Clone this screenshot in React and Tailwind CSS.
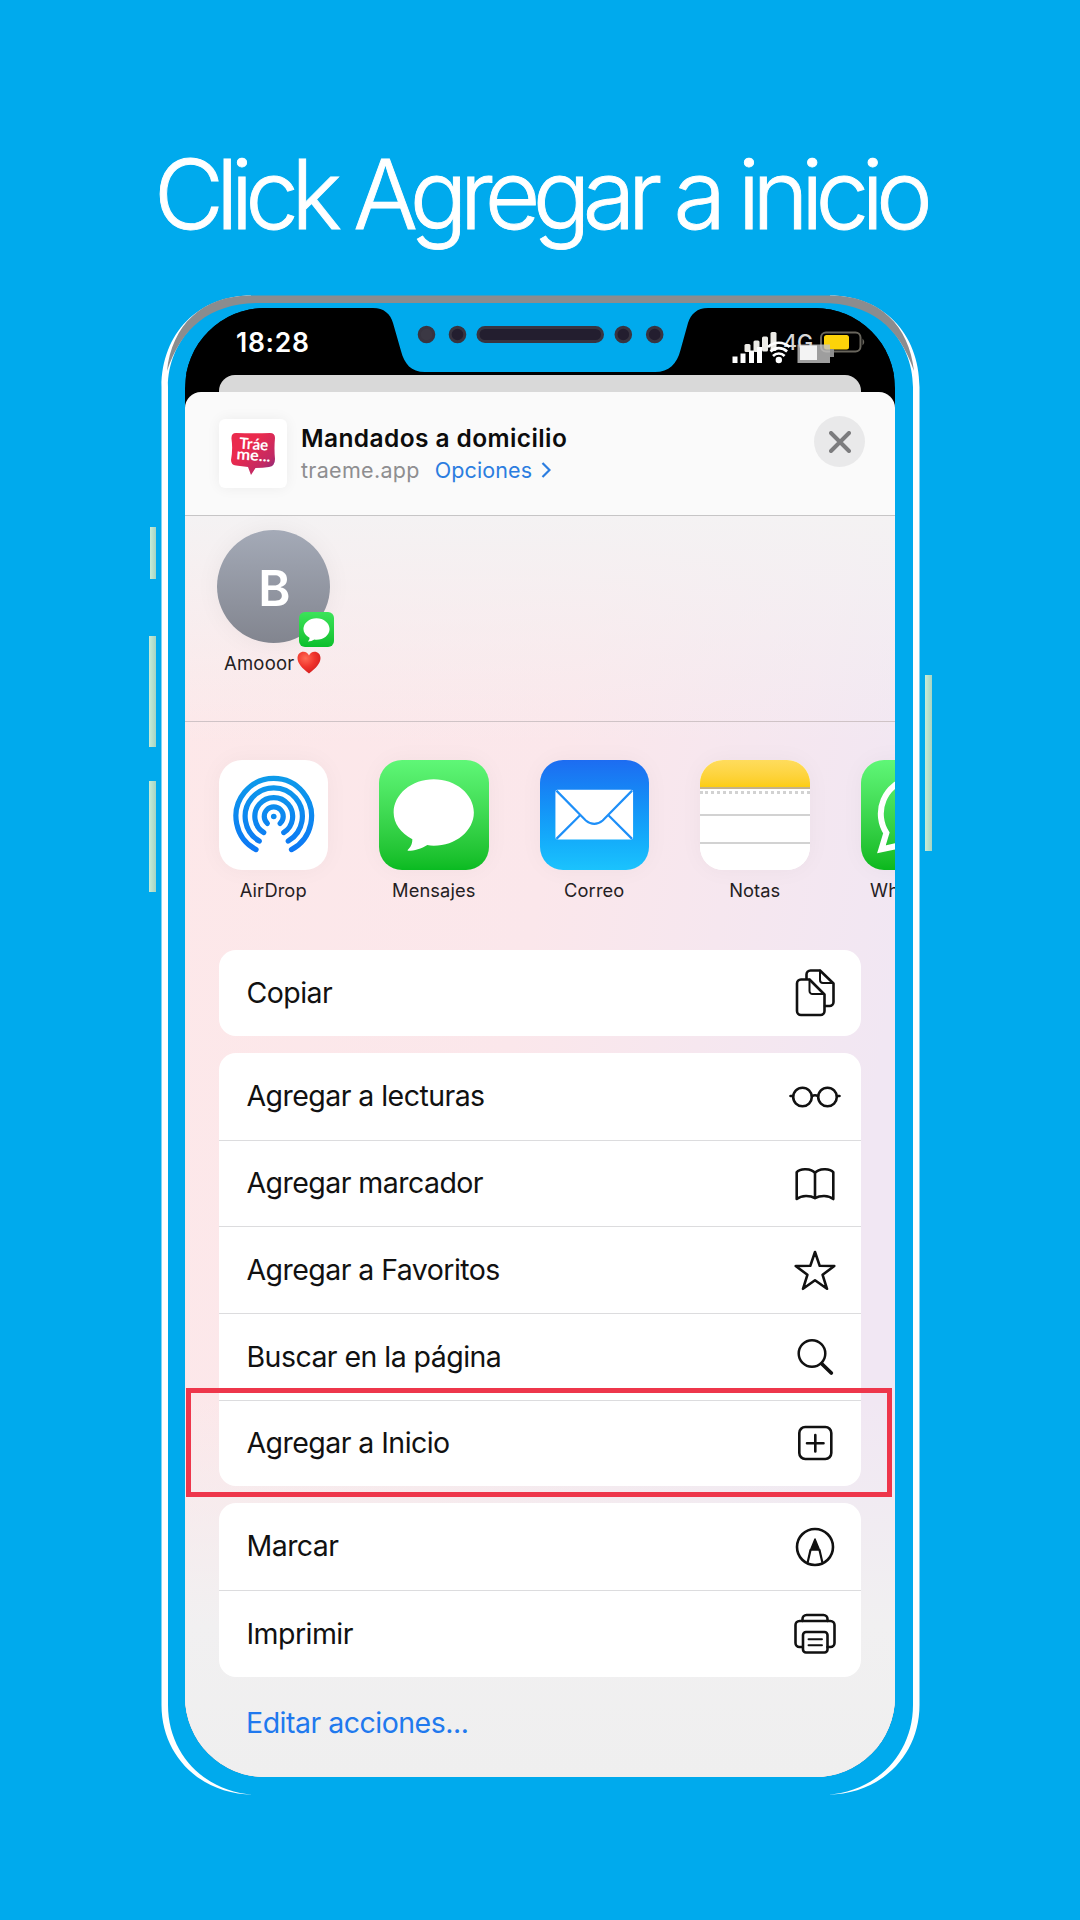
import React from "react";

const stroke = {
  fill: "none",
  stroke: "#111",
  strokeWidth: 2.6,
  strokeLinecap: "round",
  strokeLinejoin: "round",
};

function Icon({ children }) {
  return (
    <svg className="block h-[54px] w-[54px] shrink-0" viewBox="0 0 54 54" {...stroke}>
      {children}
    </svg>
  );
}

const CopyIcon = () => (
  <Icon>
    <path d="M18.5 12.5V8.5a4 4 0 0 1 4-4H32L45.5 17.500V36a4 4 0 0 1-4 4H37" />
    <path d="M32 4.500V14a3 3 0 0 0 3 3H45" strokeWidth="2" />
    <path d="M21.500 13.500H13a4 4 0 0 0-4 4V45a4 4 0 0 0 4 4H32.500a4 4 0 0 0 4-4V28.500Z" />
    <path d="M21.500 13.500V25a3 3 0 0 0 3 3H36" strokeWidth="2" />
  </Icon>
);

const GlassesIcon = () => (
  <Icon>
    <circle cx="14.500" cy="27" r="9.300" />
    <circle cx="39.500" cy="27" r="9.300" />
    <path d="M24 26q3-1.500 6 0M2.500 26H5M49 26h2.500" />
  </Icon>
);

const BookIcon = () => (
  <Icon>
    <path
      d="M27 16C23.500 11.300 12 10.900 8.700 15.300V42c5-4 13.500-3.700 18.300-.8C32 38.300 40.500 38 45.300 42V15.300C42 10.900 30.500 11.300 27 16ZM27 16V41"
      strokeLinejoin="round"
    />
  </Icon>
);

const StarIcon = () => (
  <Icon>
    <path d="M27 9L31.700 22.800L46.300 23L34.600 31.800L39 45.800L27 37.300L15 45.800L19.400 31.800L7.700 23L22.300 22.800Z" />
  </Icon>
);

const SearchIcon = () => (
  <Icon>
    <circle cx="24" cy="23.500" r="13.300" strokeWidth="2.500" />
    <path d="M34 34L43.300 43" strokeWidth="3.800" />
  </Icon>
);

const PlusSquareIcon = () => (
  <Icon>
    <rect x="11.300" y="11" width="32" height="32" rx="6" />
    <path d="M27.300 19V35.500M19 27.200H35.500" />
  </Icon>
);

const MarkupIcon = () => (
  <Icon>
    <circle cx="27" cy="27" r="18" />
    <path d="M27 19L31.500 30H22.500Z" fill="#111" strokeWidth="1.500" />
    <path d="M22.500 30L19.500 43M31.500 30L34.500 43" strokeWidth="2.200" />
  </Icon>
);

const PrinterIcon = () => (
  <Icon>
    <path d="M14.500 14V12a4 4 0 0 1 4-4H35.500a4 4 0 0 1 4 4V14" />
    <path d="M14.500 40H11.500a4 4 0 0 1-4-4V18a4 4 0 0 1 4-4H42.500a4 4 0 0 1 4 4V36a4 4 0 0 1-4 4H39.500" />
    <rect x="15" y="25" width="24.500" height="20.500" rx="3" />
    <path d="M20.500 32.200H34M20.500 38.200H34" strokeWidth="1.900" />
  </Icon>
);

function Bubble() {
  return (
    <path
      fill="#fff"
      d="M55 19C77 19 95.300 34 95.300 52.400S77 85.800 55 85.800C52.500 85.800 50.500 85.600 48.500 85.200C43 89 35 91 29.500 91C28.500 91 28.600 90 29.500 89.300C32.500 86.500 33.500 83 33.500 79.300C22 73 14.700 63.500 14.700 52.400C14.700 34 33 19 55 19Z"
    />
  );
}

function AirDropGlyph() {
  return (
    <svg className="h-full w-full" viewBox="0 0 109 110" fill="none" strokeWidth="5.200" strokeLinecap="round">
      <defs>
        <linearGradient id="air" gradientUnits="userSpaceOnUse" x1="0" y1="16" x2="0" y2="94">
          <stop offset="0" stopColor="#0d9bea" />
          <stop offset="1" stopColor="#0d76f5" />
        </linearGradient>
      </defs>
      <g stroke="url(#air)">
        <path d="M36.800 89.600A37.800 37.800 0 1 1 72.200 89.600" />
        <path d="M40 81.100A28.600 28.600 0 1 1 69 81.100" />
        <path d="M44.500 72.500A18.900 18.900 0 1 1 64.500 72.500" />
        <path d="M48.100 63.400A9.500 9.500 0 1 1 60.900 63.400" />
      </g>
      <circle cx="54.500" cy="56.500" r="2.800" fill="#0d8bf0" />
    </svg>
  );
}

function MessagesGlyph() {
  return (
    <svg className="h-full w-full" viewBox="0 0 110 110">
      <Bubble />
    </svg>
  );
}

function MailGlyph() {
  return (
    <svg className="h-full w-full" viewBox="0 0 110 110">
      <rect x="15.500" y="29.700" width="78" height="50" rx="2" fill="#fff" />
      <path
        d="M16.500 30.500L46 60.500Q54.500 67.500 63 60.500L92.500 30.500M16.500 79L40 55.500M92.500 79L69 55.500"
        fill="none"
        stroke="#1e8ff8"
        strokeWidth="2.200"
      />
    </svg>
  );
}

function NotesGlyph() {
  return (
    <div className="flex h-full flex-col bg-white">
      <div className="h-[29px] border-b-2 border-[#c4b28a] bg-linear-to-b from-[#ffdc5c] to-[#fccd0e]" />
      <div className="mt-[2px] border-t-[3px] border-dotted border-[#d2d2d2]" />
      <div className="mt-[20px] border-t-2 border-[#d2d2d2]" />
      <div className="mt-[26px] border-t-2 border-[#d2d2d2]" />
    </div>
  );
}

function WhatsAppGlyph() {
  return (
    <svg className="h-full w-full" viewBox="0 0 110 110" fill="none" stroke="#fff">
      <path d="M20.500 89.500L25.500 73A36 36 0 1 1 39 85.500Z" strokeWidth="6" />
      <path
        d="M43 37c-4 3-5 8-2 14 5 10 13 17 22 20 7 2 12-3 12-8l-9-5-5 5c-5-2-10-7-12-12l4-4-4-10z"
        fill="#fff"
        stroke="none"
      />
    </svg>
  );
}

const apps = [
  { name: "AirDrop", tile: "bg-white", Glyph: AirDropGlyph },
  { name: "Mensajes", tile: "bg-linear-to-b from-[#5ff777] to-[#09bb21]", Glyph: MessagesGlyph },
  { name: "Correo", tile: "bg-linear-to-b from-[#1d6cf1] to-[#1bc3fd]", Glyph: MailGlyph },
  { name: "Notas", tile: "bg-white", Glyph: NotesGlyph },
  { name: "WhatsApp", tile: "bg-linear-to-b from-[#5ff777] to-[#09b81c]", Glyph: WhatsAppGlyph },
];

const groups = [
  [{ label: "Copiar", RowIcon: CopyIcon }],
  [
    { label: "Agregar a lecturas", RowIcon: GlassesIcon },
    { label: "Agregar marcador", RowIcon: BookIcon },
    { label: "Agregar a Favoritos", RowIcon: StarIcon },
    { label: "Buscar en la página", RowIcon: SearchIcon },
    { label: "Agregar a Inicio", RowIcon: PlusSquareIcon, highlighted: true },
  ],
  [
    { label: "Marcar", RowIcon: MarkupIcon },
    { label: "Imprimir", RowIcon: PrinterIcon },
  ],
];

function ActionGroup({ rows }) {
  return (
    <div className="rounded-[17px] bg-white">
      {rows.map(({ label, RowIcon, highlighted }, i) => (
        <div
          key={label}
          className={
            "relative flex h-[86.600px] items-center justify-between pr-[19px] pl-[28px] " +
            (i > 0 ? "border-t-[1.500px] border-[#dcdcde]" : "")
          }
        >
          <span className="text-[28.500px] leading-none tracking-[-0.550px] text-[#111]">{label}</span>
          <RowIcon />
          {highlighted && (
            <div className="absolute -top-[13px] -left-[33px] h-[109px] w-[706px] border-[5px] border-[#ee364b]" />
          )}
        </div>
      ))}
    </div>
  );
}

/* Outer shell: grey across the top, white down the sides, tapering away at the bottom. */
function Shell() {
  return (
    <svg className="pointer-events-none absolute top-0 left-0 h-[1500px] w-[759px]" viewBox="0 0 759 1500">
      <path
        fill="#fff"
        d="M90 .5C38 .5 .5 38 .5 92V1410C.5 1461 40 1499.500 92 1499.500C46 1497 7 1461 7 1410V92C7 45 44 7 90 7ZM669 .5C721 .5 758.500 38 758.500 92V1410C758.500 1461 719 1499.500 667 1499.500C713 1497 752 1461 752 1410V92C752 45 715 7 669 7Z"
      />
      <path
        fill="#8b8c8e"
        d="M90 .5H669C719 .5 748 31 753 76C738 32 710 8 660 8H99C49 8 21 32 6 76C11 31 40 .5 90 .5Z"
      />
    </svg>
  );
}

function StatusBar() {
  return (
    <div className="relative h-[67px] bg-black">
      <span className="absolute top-[21px] left-[51px] text-[26.500px] leading-none font-semibold tracking-[0.700px] text-white">
        18:28
      </span>
      <svg className="absolute top-0 left-0 h-[67px] w-[710px]" viewBox="185 308 710 67">
        <path
          fill="#00aaed"
          d="M373 306V308C384 308 390.500 314 393 323L401 351C404.500 364 411 372 425 372H655C669 372 677 364 680.500 350L688 323C691 314 697 308 708 308V306Z"
        />
        <g fill="#231e2f" stroke="#383440" strokeWidth="3">
          <circle cx="426.500" cy="334.500" r="7.300" fill="#3b3844" />
          <circle cx="457.500" cy="334.500" r="7.300" />
          <rect x="478" y="327.500" width="124.500" height="14" rx="7" />
          <circle cx="623.300" cy="334.500" r="7.300" />
          <circle cx="654.700" cy="334.500" r="7.300" />
        </g>
        <g fill="#ecebe6">
          <rect x="744.500" y="344" width="6" height="8" rx="1.500" />
          <rect x="753.500" y="340.500" width="6" height="11.500" rx="1.500" />
          <rect x="762" y="336.500" width="6" height="15" rx="1.500" />
          <rect x="770.500" y="332" width="6" height="19" rx="1.500" />
        </g>
        <text x="783" y="349.500" fill="#d8d8d8" fontFamily="Inter, sans-serif" fontSize="21.500" fontWeight="500">
          4G
        </text>
        <rect x="821" y="332.500" width="39.500" height="19" rx="5" fill="none" stroke="#68655c" strokeWidth="2" />
        <rect x="824" y="335" width="25" height="14.500" rx="2.500" fill="#fdd309" />
        <path d="M862.500 338.500q3.500 3.500 0 7z" fill="#68655c" />
        <g fill="#fff">
          <rect x="732.500" y="356.500" width="5" height="6.500" />
          <rect x="740.500" y="353.500" width="5" height="9.500" />
          <rect x="749" y="350.500" width="5" height="12.500" />
          <rect x="757" y="347" width="5" height="16" />
          <circle cx="778.800" cy="360" r="3.200" />
        </g>
        <g fill="none" stroke="#fff" strokeWidth="2.600">
          <path d="M773 356a8 8 0 0 1 11.600 0M770.500 351.500a12 12 0 0 1 16.600 0M768 347a16 16 0 0 1 21.600 0" />
        </g>
        <rect x="797.500" y="344.500" width="32.500" height="18.500" fill="#c6c6c6" opacity=".8" />
        <path d="M830 349h4v8h-4z" fill="#8e8e8e" />
        <rect x="800" y="345.500" width="17" height="14.500" fill="#f3f3f3" />
      </svg>
    </div>
  );
}

function SiteIcon() {
  return (
    <div className="flex h-[69px] w-[68px] items-center justify-center rounded-md bg-white shadow-[0_0_14px_rgba(0,0,0,0.060)]">
      <svg className="h-[69px] w-[68px]" viewBox="0 0 68 69">
        <defs>
          <linearGradient id="logo" x1="0" y1="0" x2="1" y2="1">
            <stop offset=".35" stopColor="#ea2a4d" />
            <stop offset=".75" stopColor="#c12964" />
            <stop offset="1" stopColor="#6d2b86" />
          </linearGradient>
        </defs>
        <path
          fill="url(#logo)"
          d="M17 14Q35 14.500 51 14Q56 14 56 19Q55 29 56 40Q56 47 50 48Q44 49 36.500 49L32 56L29 48L17 46.500Q12 46 12 41Q14 30 12.500 20Q12 14 17 14Z"
        />
        <g
          fill="#fff"
          fontFamily="Lato, sans-serif"
          fontWeight="700"
          transform="rotate(4 34 30)"
        >
          <text x="20" y="30.500" fontSize="15.500" textLength="29" lengthAdjust="spacingAndGlyphs">Tráe</text>
          <text x="18" y="41.500" fontSize="15.500" textLength="34" lengthAdjust="spacingAndGlyphs">me...</text>
        </g>
      </svg>
    </div>
  );
}

function SheetHeader() {
  return (
    <header className="flex h-[124px] border-b-[1.500px] border-[#c6c5c6] pt-[27px] pr-[30px] pl-[34px]">
      <SiteIcon />
      <div className="ml-[14px] flex-1 whitespace-nowrap">
        <div className="mt-[5px] text-[24.500px] leading-[28px] font-semibold tracking-[0.400px] text-[#0c0c0c]">
          Mandados a domicilio
        </div>
        <div className="mt-[5px] flex items-center text-[21.500px] leading-[26px]">
          <span className="tracking-[0.300px] text-[#8e8e90]">traeme.app</span>
          <span className="ml-[15px] tracking-[0.100px] text-[#2b7de0]">Opciones</span>
          <svg className="ml-[9px] h-[18px] w-[10px]" viewBox="0 0 10 18" fill="none" stroke="#2b7de0" strokeWidth="2.200">
            <path d="M1.500 2L8.500 9L1.500 16" />
          </svg>
        </div>
      </div>
      <button className="-mt-[3px] flex h-[51px] w-[51px] items-center justify-center rounded-full bg-[#e9e9ea]">
        <svg className="h-[22px] w-[22px]" viewBox="0 0 22 22" stroke="#7c7c7e" strokeWidth="4" strokeLinecap="round">
          <path d="M2 2L20 20M20 2L2 20" />
        </svg>
      </button>
    </header>
  );
}

function ContactRow() {
  return (
    <section className="h-[206px] border-b-[1.500px] border-[#cfc3c6] pt-[14px] pl-[32px]">
      <div className="relative flex h-[113px] w-[113px] items-center justify-center rounded-full bg-linear-to-b from-[#a4aab7] to-[#82858f] shadow-[0_0_24px_rgba(0,0,0,0.050)]">
        <span className="mt-[3px] ml-[2px] text-[49px] leading-none font-semibold text-white">B</span>
        <span className="absolute -right-[4px] bottom-[-4px] h-[35px] w-[35px] rounded-[6px] bg-linear-to-b from-[#3be459] to-[#0abf2c]">
          <svg className="h-full w-full" viewBox="6 0 98 108">
            <Bubble />
          </svg>
        </span>
      </div>
      <div className="mt-[8px] ml-[7px] flex items-center">
        <span className="text-[18.500px] leading-[22px] tracking-[0.200px] text-[#242022]">Amooor</span>
        <svg className="ml-[3px] h-[23px] w-[24px]" viewBox="0 0 24 23">
          <defs>
            <radialGradient id="heart" cx=".35" cy=".3" r=".8">
              <stop offset="0" stopColor="#ff6a55" />
              <stop offset=".5" stopColor="#f0342c" />
              <stop offset="1" stopColor="#cf1a1c" />
            </radialGradient>
          </defs>
          <path fill="url(#heart)" d="M12 22.500C5 17 .5 12.500 .5 7C.5 3 3.200 .7 6.500 .7C9 .7 11 2.200 12 4.600C13 2.200 15 .7 17.500 .7C20.800 .7 23.500 3 23.500 7C23.500 12.500 19 17 12 22.500Z" />
        </svg>
      </div>
    </section>
  );
}

export default function App() {
  return (
    <main className="h-[1920px] w-[1080px] overflow-hidden bg-[#00aaed] pt-[136px] font-['Inter',sans-serif]">
      <h1 className="ml-[154px] flex h-[116px] items-center text-[96px] leading-[116px] font-light tracking-[-7.800px] whitespace-nowrap text-white [-webkit-text-stroke:0.900px_#fff]">
        Click Agregar a inicio
      </h1>

      <div className="relative mt-[43px] ml-[161px] h-[1500px] w-[759px] pt-[13px] pl-[24px]">
        <Shell />
        <i className="absolute top-[232px] -left-[11px] h-[52px] w-[6px] bg-linear-to-r from-[#c9ecd6] to-[#a5d5c4]" />
        <i className="absolute top-[341px] -left-[12px] h-[111px] w-[7px] bg-linear-to-r from-[#c9ecd6] to-[#a5d5c4]" />
        <i className="absolute top-[486px] -left-[12px] h-[111px] w-[7px] bg-linear-to-r from-[#c9ecd6] to-[#a5d5c4]" />
        <i className="absolute top-[380px] left-[764px] h-[176px] w-[7px] bg-linear-to-r from-[#c9ecd6] to-[#a5d5c4]" />

        <div className="h-[1469px] w-[710px] overflow-hidden rounded-[80px] bg-black">
          <StatusBar />
          <div className="mx-[34px] h-[17px] rounded-t-[16px] bg-[#d9d9d9]" />
          <div className="h-[1385px] overflow-hidden rounded-t-[16px] bg-[#fafafa]">
            <SheetHeader />
            <div className="h-[1261px] bg-[linear-gradient(to_bottom,#f4f2f3_0%,#f4f2f300_18%,#f0f0f000_70%,#f1f0f1_88%,#efefef_100%),linear-gradient(100deg,#fde8e9_0%,#fbe7eb_45%,#f1e7f3_85%,#f1e7f3_100%)]">
              <ContactRow />
              <section className="flex h-[227.500px] gap-[51px] overflow-hidden pt-[38px] pl-[33.500px]">
                {apps.map(({ name, tile, Glyph }) => (
                  <div key={name} className="flex w-[109.500px] shrink-0 flex-col items-center">
                    <div className={"h-[110px] w-[109.500px] overflow-hidden rounded-[23px] shadow-[0_0_24px_rgba(0,0,0,0.040)] " + tile}>
                      <Glyph />
                    </div>
                    <span className="mt-[8px] text-[18.300px] leading-[24px] tracking-[0.100px] text-[#242022]">{name}</span>
                  </div>
                ))}
              </section>
              <section className="flex flex-col gap-[17.200px] pr-[34.500px] pl-[33.500px]">
                {groups.map((rows) => (
                  <ActionGroup key={rows[0].label} rows={rows} />
                ))}
              </section>
              <div className="mt-[29px] ml-[61px] text-[28.500px] leading-[34px] tracking-[-0.500px] text-[#2079ee]">
                Editar acciones...
              </div>
            </div>
          </div>
        </div>
      </div>
    </main>
  );
}
